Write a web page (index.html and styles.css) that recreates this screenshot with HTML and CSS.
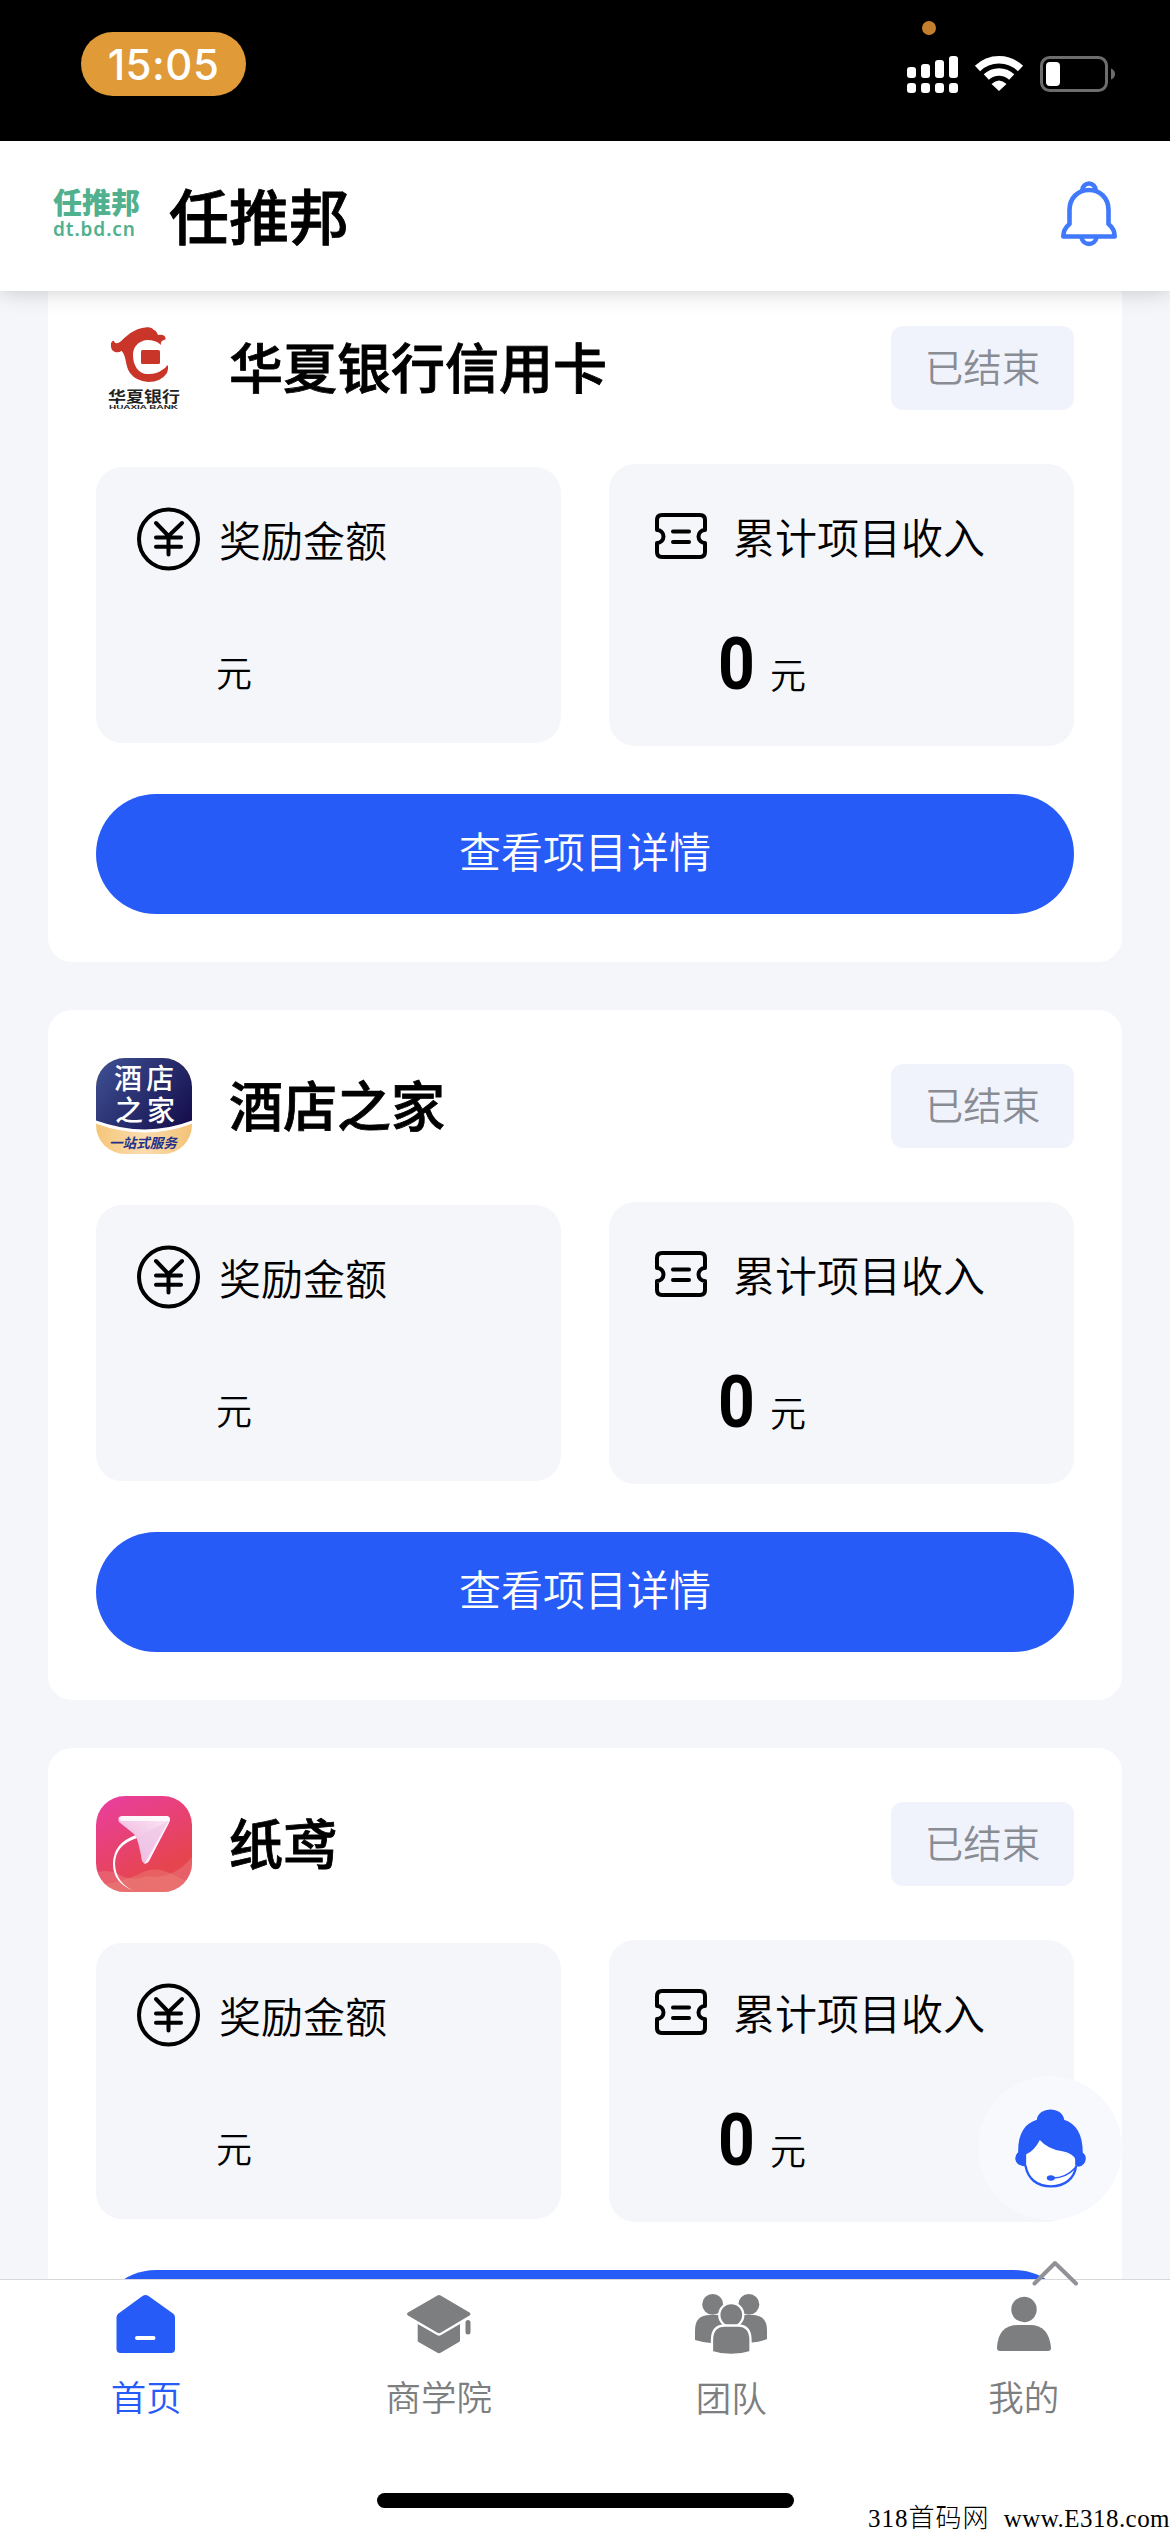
FILE: index.html
```html
<!DOCTYPE html>
<html lang="zh-CN">
<head>
<meta charset="utf-8">
<title>任推邦</title>
<link rel="stylesheet" href="styles.css">
</head>
<body>
<svg class="defs" aria-hidden="true">
  <symbol id="yen" viewBox="0 0 64 64">
    <g fill="none" stroke="#000" stroke-width="4" stroke-linecap="round" stroke-linejoin="round">
      <circle cx="31.500" cy="32" r="29.5"/>
      <path d="M19 16 31.500 29 45 16M31.500 29V47.500M19 30.500H44M19 39.700H44"/>
    </g>
  </symbol>
  <symbol id="ticket" viewBox="0 0 54 48">
    <g fill="none" stroke="#000" stroke-width="4" stroke-linejoin="round" stroke-linecap="round">
      <path d="M8 3H46Q51 3 51 8V18A6.500 6.500 0 0 0 51 31V40Q51 45 46 45H8Q3 45 3 40V31A6.500 6.500 0 0 0 3 18V8Q3 3 8 3Z"/>
      <path d="M19 19.500H35M19 30H35"/>
    </g>
  </symbol>
</svg>

<div class="status">
  <span class="clock">15:05</span>
  <svg class="indicators" viewBox="900 18 220 80">
    <circle cx="929" cy="28" r="7" fill="#c47f2c"/>
    <g fill="#fff">
      <rect x="907" y="67" width="9" height="11" rx="3"/><rect x="921" y="64" width="9" height="14" rx="3"/>
      <rect x="935" y="60" width="9" height="18" rx="3"/><rect x="949" y="56" width="9" height="22" rx="3"/>
      <rect x="907" y="83" width="9" height="10" rx="3"/><rect x="921" y="83" width="9" height="10" rx="3"/>
      <rect x="935" y="83" width="9" height="10" rx="3"/><rect x="949" y="83" width="9" height="10" rx="3"/>
      <path d="M999 91 991.500 84Q999 77 1006.500 84Z"/>
      <rect x="1046" y="62" width="14" height="24" rx="4"/>
    </g>
    <g fill="none" stroke="#fff" stroke-width="7.500">
      <path d="M977.500 68.500A31 31 0 0 1 1020.500 68.500M986.300 77A18.500 18.500 0 0 1 1011.700 77"/>
    </g>
    <rect x="1041.500" y="57.500" width="65" height="33" rx="8" fill="none" stroke="#6d6d6d" stroke-width="3"/>
    <path d="M1111 68.500Q1115 70 1115 74T1111 79.500Z" fill="#6d6d6d"/>
  </svg>
</div>

<header class="header">
  <div class="logo"><span class="logo-name">任推邦</span><span class="logo-url">dt.bd.cn</span></div>
  <h1>任推邦</h1>
  <svg class="bell" viewBox="0 0 56 66" fill="none" stroke="#4079fb" stroke-width="4.600" stroke-linejoin="round">
    <path d="M8.500 43V29C8.500 17 17 9 28 9S47.500 17 47.500 29V43Q53.700 48 53.700 55.500H2.300Q2.300 48 8.500 43Z"/>
    <path d="M21.500 9A6.500 6.500 0 0 1 34.500 9M20.500 56.500A7.600 7.600 0 0 0 35.500 56.500"/>
  </svg>
</header>

<main class="feed">
  <article class="card">
    <div class="card-head">
      <svg class="app-icon" viewBox="0 0 96 96">
        <path fill="#c93528" d="M15 23Q17.500 19 18.500 22Q19.500 24.500 24 22C29 18 37 8 51 7.300Q56 7 57.500 10Q60 10 62 15Q66 14 68.500 16Q71 19 68 20Q64 21 65 25Q60 20 51 20C42 21 37 27 37 35C37 46 43 55 53 54Q61 54 66 50Q69 49 71.400 45Q73 47 71 53Q65 62 52 62Q40 61 34 53C29 46 31 37 25.600 30.700Q23 33 19 32Q14 30 15 23Z"/>
        <rect x="45" y="30" width="19" height="14" rx="1.500" fill="#c93528"/>
        <text x="12" y="88" class="bank-zh" textLength="72" transform="translate(0 11.500) scale(1 .8)">华夏银行</text>
        <text x="13" y="88.500" class="bank-en" textLength="69" lengthAdjust="spacingAndGlyphs">HUAXIA BANK</text>
      </svg>
      <h2>华夏银行信用卡</h2>
      <span class="tag">已结束</span>
    </div>
    <div class="stats">
      <section class="stat reward">
        <div class="stat-title"><svg class="yen"><use href="#yen"/></svg>奖励金额</div>
        <div class="amount"><span class="unit">元</span></div>
      </section>
      <section class="stat income">
        <div class="stat-title"><svg class="ticket"><use href="#ticket"/></svg>累计项目收入</div>
        <div class="amount"><b>0</b><span class="unit">元</span></div>
      </section>
    </div>
    <a class="detail">查看项目详情</a>
  </article>

  <article class="card">
    <div class="card-head">
      <svg class="app-icon" viewBox="0 0 96 96">
        <defs>
          <linearGradient id="navy" x1="0" y1="0.200" x2="1" y2="0.800"><stop offset="0" stop-color="#3d4f92"/><stop offset="1" stop-color="#150f4c"/></linearGradient>
          <linearGradient id="gold"><stop offset="0" stop-color="#f5c678"/><stop offset="0.500" stop-color="#fbdcae"/><stop offset="1" stop-color="#f3c276"/></linearGradient>
          <clipPath id="tile"><rect width="96" height="96" rx="29"/></clipPath>
        </defs>
        <g clip-path="url(#tile)">
          <rect width="96" height="96" fill="url(#gold)"/>
          <path d="M-3 -3H99V63Q50 83 -3 63Z" fill="url(#navy)" stroke="#fff" stroke-width="3"/>
        </g>
        <g class="hotel-name"><text x="18" y="31" textLength="60">酒店</text><text x="19" y="63" textLength="60">之家</text></g>
        <text class="hotel-sub" x="13" y="90">一站式服务</text>
      </svg>
      <h2>酒店之家</h2>
      <span class="tag">已结束</span>
    </div>
    <div class="stats">
      <section class="stat reward">
        <div class="stat-title"><svg class="yen"><use href="#yen"/></svg>奖励金额</div>
        <div class="amount"><span class="unit">元</span></div>
      </section>
      <section class="stat income">
        <div class="stat-title"><svg class="ticket"><use href="#ticket"/></svg>累计项目收入</div>
        <div class="amount"><b>0</b><span class="unit">元</span></div>
      </section>
    </div>
    <a class="detail">查看项目详情</a>
  </article>

  <article class="card">
    <div class="card-head">
      <svg class="app-icon" viewBox="0 0 96 96">
        <defs>
          <linearGradient id="pink" x1="0.200" y1="0" x2="0.700" y2="1"><stop offset="0" stop-color="#e93e9b"/><stop offset="0.800" stop-color="#e6454f"/></linearGradient>
          <linearGradient id="kite" x1="1" y1="0" x2="0.300" y2="0.900"><stop offset="0" stop-color="#fbeaf7"/><stop offset="1" stop-color="#eeb0dc"/></linearGradient>
        </defs>
        <g clip-path="url(#tile)">
          <rect width="96" height="96" fill="url(#pink)"/>
          <path d="M0 77Q11 72 24 79T50 80Q76 85 96 61V96H0Z" fill="#ea7c80" opacity=".5"/>
          <path d="M0 90Q30 85 45 77Q60 69 78 79T96 83V96H0Z" fill="#ec8a7c" opacity=".4"/>
        </g>
        <path d="M41 42Q19 49 19 68Q20 87 38 95Q17 87 17 68Q17 47 40 39Z" fill="#fff"/>
        <path d="M25 20H71Q76 21 73 27L53 65Q49 70 46 65Q44 46 38 38L23 26Q21 21 25 20Z" fill="url(#kite)"/>
        <path d="M23 22.500Q24 20 27 20H71Q75 21 73 25.500L72 25H25ZM74 24 53 65Q51 68 48 68L70 30Z" fill="#fff" opacity=".8"/>
        <path d="M41 42 72 25 51 64Q48 67 46 64Z" fill="#eec7e6" opacity=".65"/>
      </svg>
      <h2>纸鸢</h2>
      <span class="tag">已结束</span>
    </div>
    <div class="stats">
      <section class="stat reward">
        <div class="stat-title"><svg class="yen"><use href="#yen"/></svg>奖励金额</div>
        <div class="amount"><span class="unit">元</span></div>
      </section>
      <section class="stat income">
        <div class="stat-title"><svg class="ticket"><use href="#ticket"/></svg>累计项目收入</div>
        <div class="amount"><b>0</b><span class="unit">元</span></div>
      </section>
    </div>
    <div class="detail"></div>
  </article>
</main>

<nav class="tabs">
  <div class="tab-row">
    <a class="tab active">
      <svg width="72" height="60" viewBox="-6.500 -1 72 60"><path fill="#275bf7" d="M26 1Q29 -1 32 1L56.500 18.500Q58.500 20 58.500 22.500V54Q58.500 58 54.500 58H4Q0 58 0 54V22.500Q0 20 2 18.500Z"/><path d="M20.500 43H37" stroke="#fff" stroke-width="4" stroke-linecap="round"/></svg>
      首页
    </a>
    <a class="tab">
      <svg width="72" height="60" viewBox="-4 -1 72 60" fill="#7d7e80"><path d="M30 .800Q32 -.600 34 .800L62.500 17.500Q64.500 19 62.500 20.500L34 37.500Q32 39 30 37.500L1 20.500Q-1 19 1 17.500ZM10.700 29 30 40Q32 41.500 34 40L53 29V45.500Q53 46.500 52 47L34 57.500Q32 58.800 30 57.500L11.500 47Q10.700 46.500 10.700 45.500Z"/><rect x="58.500" y="25" width="5" height="14.500" rx="2.500"/></svg>
      商学院
    </a>
    <a class="tab">
      <svg width="72" height="61" viewBox="0 0 72 61" fill="#7d7e80"><ellipse cx="17.700" cy="10.400" rx="10.500" ry="10.400"/><ellipse cx="53.800" cy="10.400" rx="10.500" ry="10.400"/><path d="M0 46V36Q0 21 15 21H57Q72 21 72 36V45Q65 48 57 48.500L36 44 16 49Q8 48.500 0 46Z"/><g stroke="#fff" stroke-width="2.300"><ellipse cx="36.300" cy="21" rx="12" ry="12"/><path d="M17 57V46Q17 31.500 30 31.500H43Q55.500 31.500 55.500 46V58Q36 64 17 58Z"/></g></svg>
      团队
    </a>
    <a class="tab">
      <svg width="72" height="60" viewBox="-9 -3 72 60" fill="#7d7e80"><ellipse cx="27" cy="12.500" rx="12.700" ry="12.700"/><path d="M0 51Q1 28 21 28H33Q52 28 54 51Q54 54 51 54H3Q0 54 0 51Z"/></svg>
      我的
    </a>
  </div>
  <div class="home-bar"></div>
</nav>

<div class="service">
  <svg width="71" height="79" viewBox="222 175 212 237">
    <path fill="#fff" d="M255 310 296 268 402 325V345Q390 405 329 405T255 345Z"/>
    <path fill="none" stroke="#275bf7" stroke-width="7" d="M253 345C260 385 288 407 329 407S400 385 405 345"/>
    <path fill="none" stroke="#275bf7" stroke-width="5" d="M335 382Q374 382 402 352"/>
    <ellipse cx="329" cy="382" rx="12" ry="8" fill="#275bf7"/>
    <path fill="#275bf7" d="M287 207C292 166 364 166 369 207C405 219 425 250 425 306Q434 312 434 324Q432 345 411 348L402 343V326Q397 309 364 302Q320 296 296 268Q279 301 255 311V347Q225 346 222 324Q222 312 231 305C230 250 250 218 287 207Z"/>
  </svg>
</div>
<svg class="to-top" viewBox="0 0 46 26" fill="none" stroke="#919298" stroke-width="4" stroke-linecap="round" stroke-linejoin="round"><path d="M2.500 23.500 23 3 44 23.500"/></svg>
<div class="watermark"><span class="num">318</span><span class="kai">首码网</span><span class="url">www.E318.com</span></div>
</body>
</html>
```
FILE: styles.css
```css
* { box-sizing: border-box; }

body {
  position: relative;
  margin: 0;
  width: 1170px;
  height: 2532px;
  overflow: hidden;
  display: flex;
  flex-direction: column;
  background: #f5f6fa;
  color: #000;
  font-family: "Noto Sans CJK SC", sans-serif;
  font-weight: 350;
}

.defs { position: absolute; width: 0; height: 0; }

.status {
  flex: none;
  height: 141px;
  padding: 18px 50px 0 81px;
  display: flex;
  justify-content: space-between;
  align-items: flex-start;
  background: #000;
}

.clock {
  width: 165px;
  height: 64px;
  margin-top: 14px;
  border-radius: 32px;
  background: #e09a38;
  color: #fff;
  font: 450 42px/65px Inter, sans-serif;
  letter-spacing: 0.5px;
  text-align: center;
}

.indicators { width: 220px; height: 80px; }

.header {
  position: relative;
  z-index: 2;
  flex: none;
  height: 150px;
  padding: 0 53px;
  display: flex;
  align-items: center;
  background: #fff;
  box-shadow: 0 0 22px rgba(0, 0, 0, 0.2);
}

.logo {
  width: 87px;
  margin-right: 29px;
  display: flex;
  flex-direction: column;
  color: #51b08e;
  font-weight: 900;
}

.logo-name { font-size: 29px; line-height: 30px; margin-top: -7px; }

.logo-url {
  margin-top: 2px;
  font: 600 19px/22px "Noto Sans", sans-serif;
  letter-spacing: 0.9px;
}

h1, h2 { margin: 0; font-weight: 500; -webkit-text-stroke: 0.8px #000; }
h1 { margin-top: -5px; font-size: 60px; line-height: 80px; }

.bell { width: 56px; height: 66px; margin: -4px 0 0 auto; }

.feed {
  flex: 1;
  min-height: 0;
  overflow: hidden;
  padding: 0 48px;
  display: flex;
  flex-direction: column;
  gap: 48px;
}

.card {
  flex: none;
  height: 690px;
  padding: 48px;
  display: flex;
  flex-direction: column;
  gap: 48px;
  border-radius: 24px;
  background: #fff;
}

.card:first-child { margin-top: -19px; }

.card-head { height: 96px; display: flex; align-items: center; }
.app-icon { width: 96px; height: 96px; margin-right: 37px; }
h2 { margin-top: -4px; font-size: 54px; line-height: 72px; }

.tag {
  width: 183px;
  height: 84px;
  margin-left: auto;
  border-radius: 12px;
  background: #f0f3fb;
  color: #8a8c93;
  font-size: 38.500px;
  line-height: 79px;
  text-align: center;
}

.bank-zh { font-size: 18px; font-weight: 700; fill: #222; }
.bank-en { font: 700 5.800px "Liberation Sans", sans-serif; fill: #222; }
.hotel-name { font-size: 28px; font-weight: 500; fill: #fff; }
.hotel-sub { font-size: 13.600px; font-weight: 700; font-style: italic; fill: #24318a; }

.stats { height: 282px; display: flex; gap: 48px; align-items: center; }

.stat {
  flex: 1;
  height: 282px;
  border-radius: 26px;
  background: #f5f6fa;
}

.reward { height: 276px; }

.stat-title { display: flex; align-items: center; height: 64px; font-size: 42px; line-height: 60px; }
.reward .stat-title { margin: 40px 0 0 41px; line-height: 62px; }
.income .stat-title { margin: 40px 0 0 45px; }
.yen { width: 64px; height: 64px; margin-right: 18px; }
.ticket { width: 54px; height: 48px; margin-right: 25px; }

.amount { display: flex; align-items: baseline; height: 90px; line-height: 90px; }
.reward .amount { margin: 55px 0 0 120px; }
.income .amount { margin: 51px 0 0 109px; }
.amount b {
  width: 40px;
  margin-right: 12px;
  font: 700 73px/90px Roboto, sans-serif;
  transform: scaleX(0.88);
  transform-origin: left;
}
.unit { font-size: 36px; }

.detail {
  height: 120px;
  border-radius: 60px;
  background: #275bf7;
  color: #fff;
  font-size: 42px;
  line-height: 111px;
  text-align: center;
}

.tabs {
  position: relative;
  flex: none;
  height: 253px;
  display: flex;
  flex-direction: column;
  align-items: center;
  justify-content: space-between;
  padding-bottom: 24px;
  border-top: 1px solid #d8d8dc;
  background: #fff;
}

.tab-row { width: 100%; display: flex; }

.tab {
  flex: 1;
  padding-top: 14px;
  display: flex;
  flex-direction: column;
  align-items: center;
  gap: 17px;
  color: #7d7e80;
  font-size: 35.500px;
  line-height: 50px;
}

.active { color: #275bf7; }

.home-bar { width: 417px; height: 15px; border-radius: 8px; background: #000; }

/* Floating controls above the feed and tab bar */
.service {
  position: absolute;
  left: 978px;
  top: 2076px;
  width: 144px;
  height: 144px;
  display: flex;
  align-items: center;
  justify-content: center;
  border-radius: 50%;
  background: #f7f9fd;
}

.to-top { position: absolute; left: 1032px; top: 2260px; width: 46px; height: 26px; }

.watermark {
  position: absolute;
  right: 0;
  bottom: 0;
  width: 302px;
  display: flex;
  align-items: baseline;
  font: 400 25px/26px "Liberation Serif", serif;
  white-space: pre;
}

.num { letter-spacing: 1px; }
.kai { font: 300 26px/26px "Noto Sans CJK SC", sans-serif; letter-spacing: 1px; }
.url { margin-left: auto; letter-spacing: 0.45px; }
```
